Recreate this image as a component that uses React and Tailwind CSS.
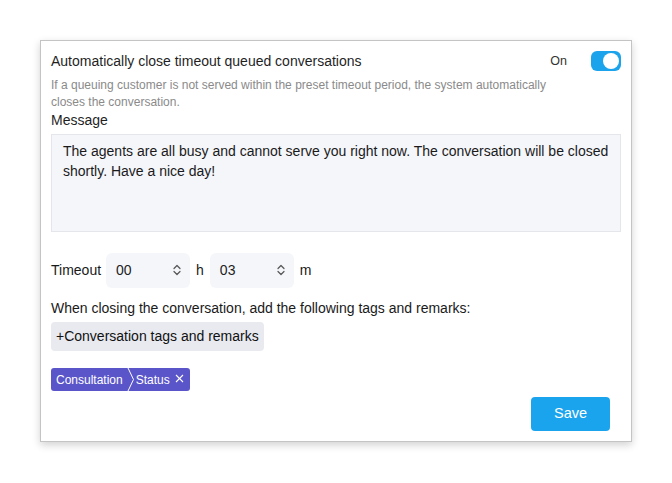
import React from "react";

function UpDown() {
  return (
    <svg width="10" height="14" viewBox="0 0 10 14" fill="none" stroke="#555" strokeWidth="1.2" strokeLinecap="round" strokeLinejoin="round">
      <polyline points="2,5.5 5,2.5 8,5.5" />
      <polyline points="2,8.5 5,11.5 8,8.5" />
    </svg>
  );
}

function TimeInput({ value }) {
  return (
    <div className="flex items-center justify-between w-[84px] h-[35px] rounded-md bg-[#f5f6fa] pl-[10px] pr-[8px] text-[14px] text-[#222]">
      <span>{value}</span>
      <UpDown />
    </div>
  );
}

export default function App() {
  return (
    <div className="min-h-screen bg-white pt-[40px] pl-[40px] font-['Liberation_Sans',Arial,sans-serif]">
      <div className="w-[592px] h-[402px] bg-white border border-[#c4c4c4] shadow-[0_3px_8px_rgba(0,0,0,0.18)] px-[10px] pt-[10px] pb-[10px] flex flex-col">
        {/* Header */}
        <div className="flex items-center h-[20px] text-[14px] text-[#1f1f1f]">
          <span className="flex-1">Automatically close timeout queued conversations</span>
          <span className="mr-[24px] text-[12.5px] text-[#333]">On</span>
          <div className="w-[30px] h-[20px] rounded-[6px] bg-[#1ba3ec] flex items-center justify-end pr-[2px]">
            <div className="w-[16px] h-[16px] rounded-full bg-white"></div>
          </div>
        </div>
        <p className="mt-[6px] text-[12px] leading-[17px] text-[#8a8a8a] w-[500px]">
          If a queuing customer is not served within the preset timeout period, the system automatically closes the conversation.
        </p>
        <div className="text-[14px] leading-[20px] text-[#1f1f1f] mt-[-1px]">Message</div>

        {/* Message box */}
        <div className="mt-[4px] h-[99px] bg-[#f5f6fa] border border-[#e4e6eb] px-[11px] pt-[6px] text-[14px] leading-[20px] text-[#1a1a1a]">
          The agents are all busy and cannot serve you right now. The conversation will be closed shortly. Have a nice day!
        </div>

        {/* Timeout */}
        <div className="mt-[21px] flex items-center gap-[5px] text-[14px] text-[#1a1a1a]">
          <span>Timeout</span>
          <TimeInput value="00" />
          <span className="px-[1px]">h</span>
          <TimeInput value="03" />
          <span className="px-[1px]">m</span>
        </div>

        <div className="mt-[10px] text-[14px] leading-[20px] text-[#1a1a1a]">
          When closing the conversation, add the following tags and remarks:
        </div>
        <div className="mt-[4px]">
          <button className="h-[29px] px-[5px] rounded-[4px] bg-[#e8eaf0] text-[14px] text-[#111]">
            +Conversation tags and remarks
          </button>
        </div>

        {/* Tag */}
        <div className="mt-[16px]">
          <div className="inline-flex items-center h-[23px] rounded-[3px] bg-[#5a55c9] text-white text-[12px]">
            <span className="pl-[5px] pr-[4px]">Consultation</span>
            <svg width="8" height="23" viewBox="0 0 8 23" fill="none" stroke="#fff" strokeWidth="1">
              <polyline points="1,0 6.5,11.5 1,23" />
            </svg>
            <span className="pl-[1px] pr-[5px]">Status</span>
            <svg width="9" height="9" viewBox="0 0 9 9" stroke="#fff" strokeWidth="1.1" className="mr-[6px] mb-[2px]">
              <line x1="1" y1="1" x2="8" y2="8" />
              <line x1="8" y1="1" x2="1" y2="8" />
            </svg>
          </div>
        </div>

        <div className="mt-[6px] flex justify-end pr-[11px]">
          <button className="w-[79px] h-[34px] rounded-[4px] bg-[#1ba4ee] text-white text-[14.5px]">
            Save
          </button>
        </div>
      </div>
    </div>
  );
}
